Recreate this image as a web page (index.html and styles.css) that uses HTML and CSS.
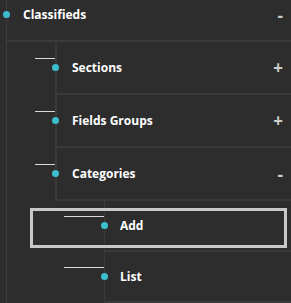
FILE: index.html
```html
<!DOCTYPE html>
<html>
<head>
<meta charset="utf-8">
<link rel="stylesheet" href="styles.css">
</head>
<body>
<div class="tree">
  <div class="row l1">
    <span class="dot"></span><span class="label">Classifieds</span><span class="toggle minus">-</span>
  </div>
  <div class="level l2">
    <div class="row">
      <span class="conn"></span><span class="dot"></span><span class="label">Sections</span><span class="toggle">+</span>
    </div>
    <div class="row">
      <span class="conn"></span><span class="dot"></span><span class="label">Fields Groups</span><span class="toggle">+</span>
    </div>
    <div class="row">
      <span class="conn"></span><span class="dot"></span><span class="label">Categories</span><span class="toggle minus">-</span>
    </div>
    <div class="level l3">
      <div class="row focused">
        <span class="conn"></span><span class="dot"></span><span class="label">Add</span>
      </div>
      <div class="row">
        <span class="conn"></span><span class="dot"></span><span class="label">List</span>
      </div>
    </div>
  </div>
</div>
</body>
</html>
```
FILE: styles.css
```css
html, body {
  margin: 0;
  padding: 0;
  background: #2d2d2d;
  width: 291px;
  height: 303px;
  overflow: hidden;
}

.tree {
  margin-left: 6px;
  border-left: 1px solid #3c3c3c;
  height: 303px;
  font-family: "Open Sans", "Liberation Sans", sans-serif;
  font-weight: 700;
  font-size: 12px;
  color: #ffffff;
}

.row {
  display: flex;
  align-items: center;
  border-bottom: 2px solid #3a3a3a;
  position: relative;
}

.l1 {
  height: 29px;
  padding-bottom: 11px;
}

.dot {
  flex: none;
  width: 7px;
  height: 7px;
  border-radius: 50%;
  background: #3dbecf;
}

.l1 .dot {
  margin-left: -4px;
}

.label {
  margin-left: 13px;
  white-space: nowrap;
}

.toggle {
  margin-left: auto;
  padding-right: 8px;
  font-weight: 700;
  font-size: 17px;
  color: #cccccc;
  line-height: 1;
}

.toggle.minus {
  padding-right: 8px;
  margin-top: 2px;
}

.conn {
  flex: none;
  height: 1px;
  background: #d8d8d8;
  margin-bottom: 19px;
}

.l2 {
  margin-left: 48px;
}

.l2 > .row {
  height: 51px;
  border-left: 2px solid #3a3a3a;
}

.l2 > .row .conn {
  width: 20px;
  margin-left: -22px;
}

.l2 > .row .dot {
  margin-left: -3px;
}

.l3 {
  margin-left: 49px;
}

.l3 > .row {
  height: 49px;
  border-left: 1px solid #3a3a3a;
}

.l3 > .row .conn {
  width: 40px;
  margin-left: -41px;
}

.l3 > .row .dot {
  margin-left: -3px;
}

.l3 > .row .label {
  margin-left: 12px;
}

.focused::after {
  content: "";
  position: absolute;
  left: -75px;
  top: 7px;
  right: 4px;
  bottom: 2px;
  border: 3px solid #c8c8c8;
}
```
